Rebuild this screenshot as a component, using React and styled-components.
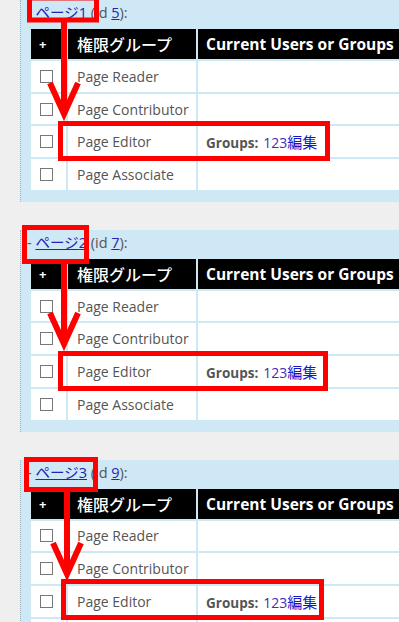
import styled, { createGlobalStyle } from "styled-components";

const GlobalStyle = createGlobalStyle`
  html, body {
    margin: 0;
    padding: 0;
    background: #efefef;
    overflow: hidden;
  }
  body {
    font-family: "Open Sans", "Noto Sans CJK JP", sans-serif;
    color: #555;
  }
`;

const Page = styled.div`
  padding-left: 20px;
  width: 379px;
  display: flex;
  flex-direction: column;
  gap: 28px;
`;

const Panel = styled.section`
  position: relative;
  background: #cfe8f5;
  border-left: 1px dotted #9bb3c2;
  padding: 0 0 10px 8px;
`;

const Title = styled.div`
  height: 27px;
  line-height: 26px;
  margin-left: -2px;
  font-size: 14.5px;
  color: #555;
  white-space: nowrap;
`;

const PageLink = styled.a`
  color: #2323b4;
  text-decoration: underline;
`;

const Grid = styled.table`
  border-collapse: separate;
  border-spacing: 2px;
  table-layout: fixed;
  width: 430px;
`;

const HeadCell = styled.th`
  background: #000;
  color: #fff;
  height: 30px;
  padding: 0 0 0 ${(p) => p.$pad || 8}px;
  text-align: left;
  font-size: ${(p) => p.$size || 16}px;
  font-weight: ${(p) => p.$weight || 700};
  width: ${(p) => p.$w}px;
  box-sizing: border-box;
  white-space: nowrap;
`;

const Cell = styled.td`
  background: #fff;
  height: 30.7px;
  padding: 0 0 0 ${(p) => p.$pad || 8}px;
  font-size: 14px;
  color: #555;
  box-sizing: border-box;
  white-space: nowrap;
`;

const Check = styled.span`
  display: block;
  width: 11px;
  height: 11px;
  border: 1px solid #777;
  background: #fff;
`;

const Label = styled.b`
  font-size: 13.5px;
  color: #555;
`;

const Num = styled.a`
  font-size: 14px;
  color: #4a2bb0;
  margin-left: 5px;
  text-decoration: none;
`;

const Edit = styled.a`
  font-size: 15px;
  color: #1616c4;
  text-decoration: none;
`;

const Marks = styled.svg`
  position: absolute;
  left: -20px;
  top: 0;
  overflow: visible;
  pointer-events: none;
`;

const roles = ["Page Reader", "Page Contributor", "Page Editor", "Page Associate"];

function Overlay({ m }) {
  const { t, x, e } = m;
  return (
    <Marks width="399" height="200">
      <rect x={t[0]} y={t[1]} width={t[2]} height={t[3]} fill="none" stroke="#f00" strokeWidth="5" />
      <line x1={x} y1={t[1] + t[3]} x2={x} y2={110} stroke="#f00" strokeWidth="6" />
      <polyline
        points={`${x - 14},83 ${x},114 ${x + 14},83`}
        fill="none"
        stroke="#f00"
        strokeWidth="6"
        strokeLinejoin="miter"
      />
      <rect x={e[0]} y={e[1]} width={e[2]} height={e[3]} fill="none" stroke="#f00" strokeWidth="5" />
    </Marks>
  );
}

function PermPanel({ n, id, rows, marks }) {
  return (
    <Panel>
      <Title>
        - <PageLink href="#">ページ{n}</PageLink> (id <PageLink href="#">{id}</PageLink>):
      </Title>
      <Grid>
        <thead>
          <tr>
            <HeadCell $w={35} $size={13} $pad={8}>+</HeadCell>
            <HeadCell $w={128} $weight={500} $pad={9}>権限グループ</HeadCell>
            <HeadCell $w={263} $size={15.5}>Current Users or Groups</HeadCell>
          </tr>
        </thead>
        <tbody>
          {roles.slice(0, rows).map((r) => (
            <tr key={r}>
              <Cell $pad={9}>
                <Check />
              </Cell>
              <Cell $pad={9}>{r}</Cell>
              <Cell>
                {r === "Page Editor" && (
                  <>
                    <Label>Groups:</Label>
                    <Num href="#">123</Num>
                    <Edit href="#">編集</Edit>
                  </>
                )}
              </Cell>
            </tr>
          ))}
        </tbody>
      </Grid>
      <Overlay m={marks} />
    </Panel>
  );
}

export default function App() {
  return (
    <>
      <GlobalStyle />
      <Page>
        <PermPanel n={1} id={5} rows={4} marks={{ t: [28.5, -2, 67, 22], x: 63, e: [59.5, 123.5, 267, 35] }} />
        <PermPanel n={2} id={7} rows={4} marks={{ t: [23.5, -2.5, 62, 34], x: 63, e: [59.5, 123.5, 265, 35] }} />
        <PermPanel n={3} id={9} rows={4} marks={{ t: [25.5, -0.5, 69, 30], x: 66, e: [62.5, 121.5, 258, 36] }} />
      </Page>
    </>
  );
}
